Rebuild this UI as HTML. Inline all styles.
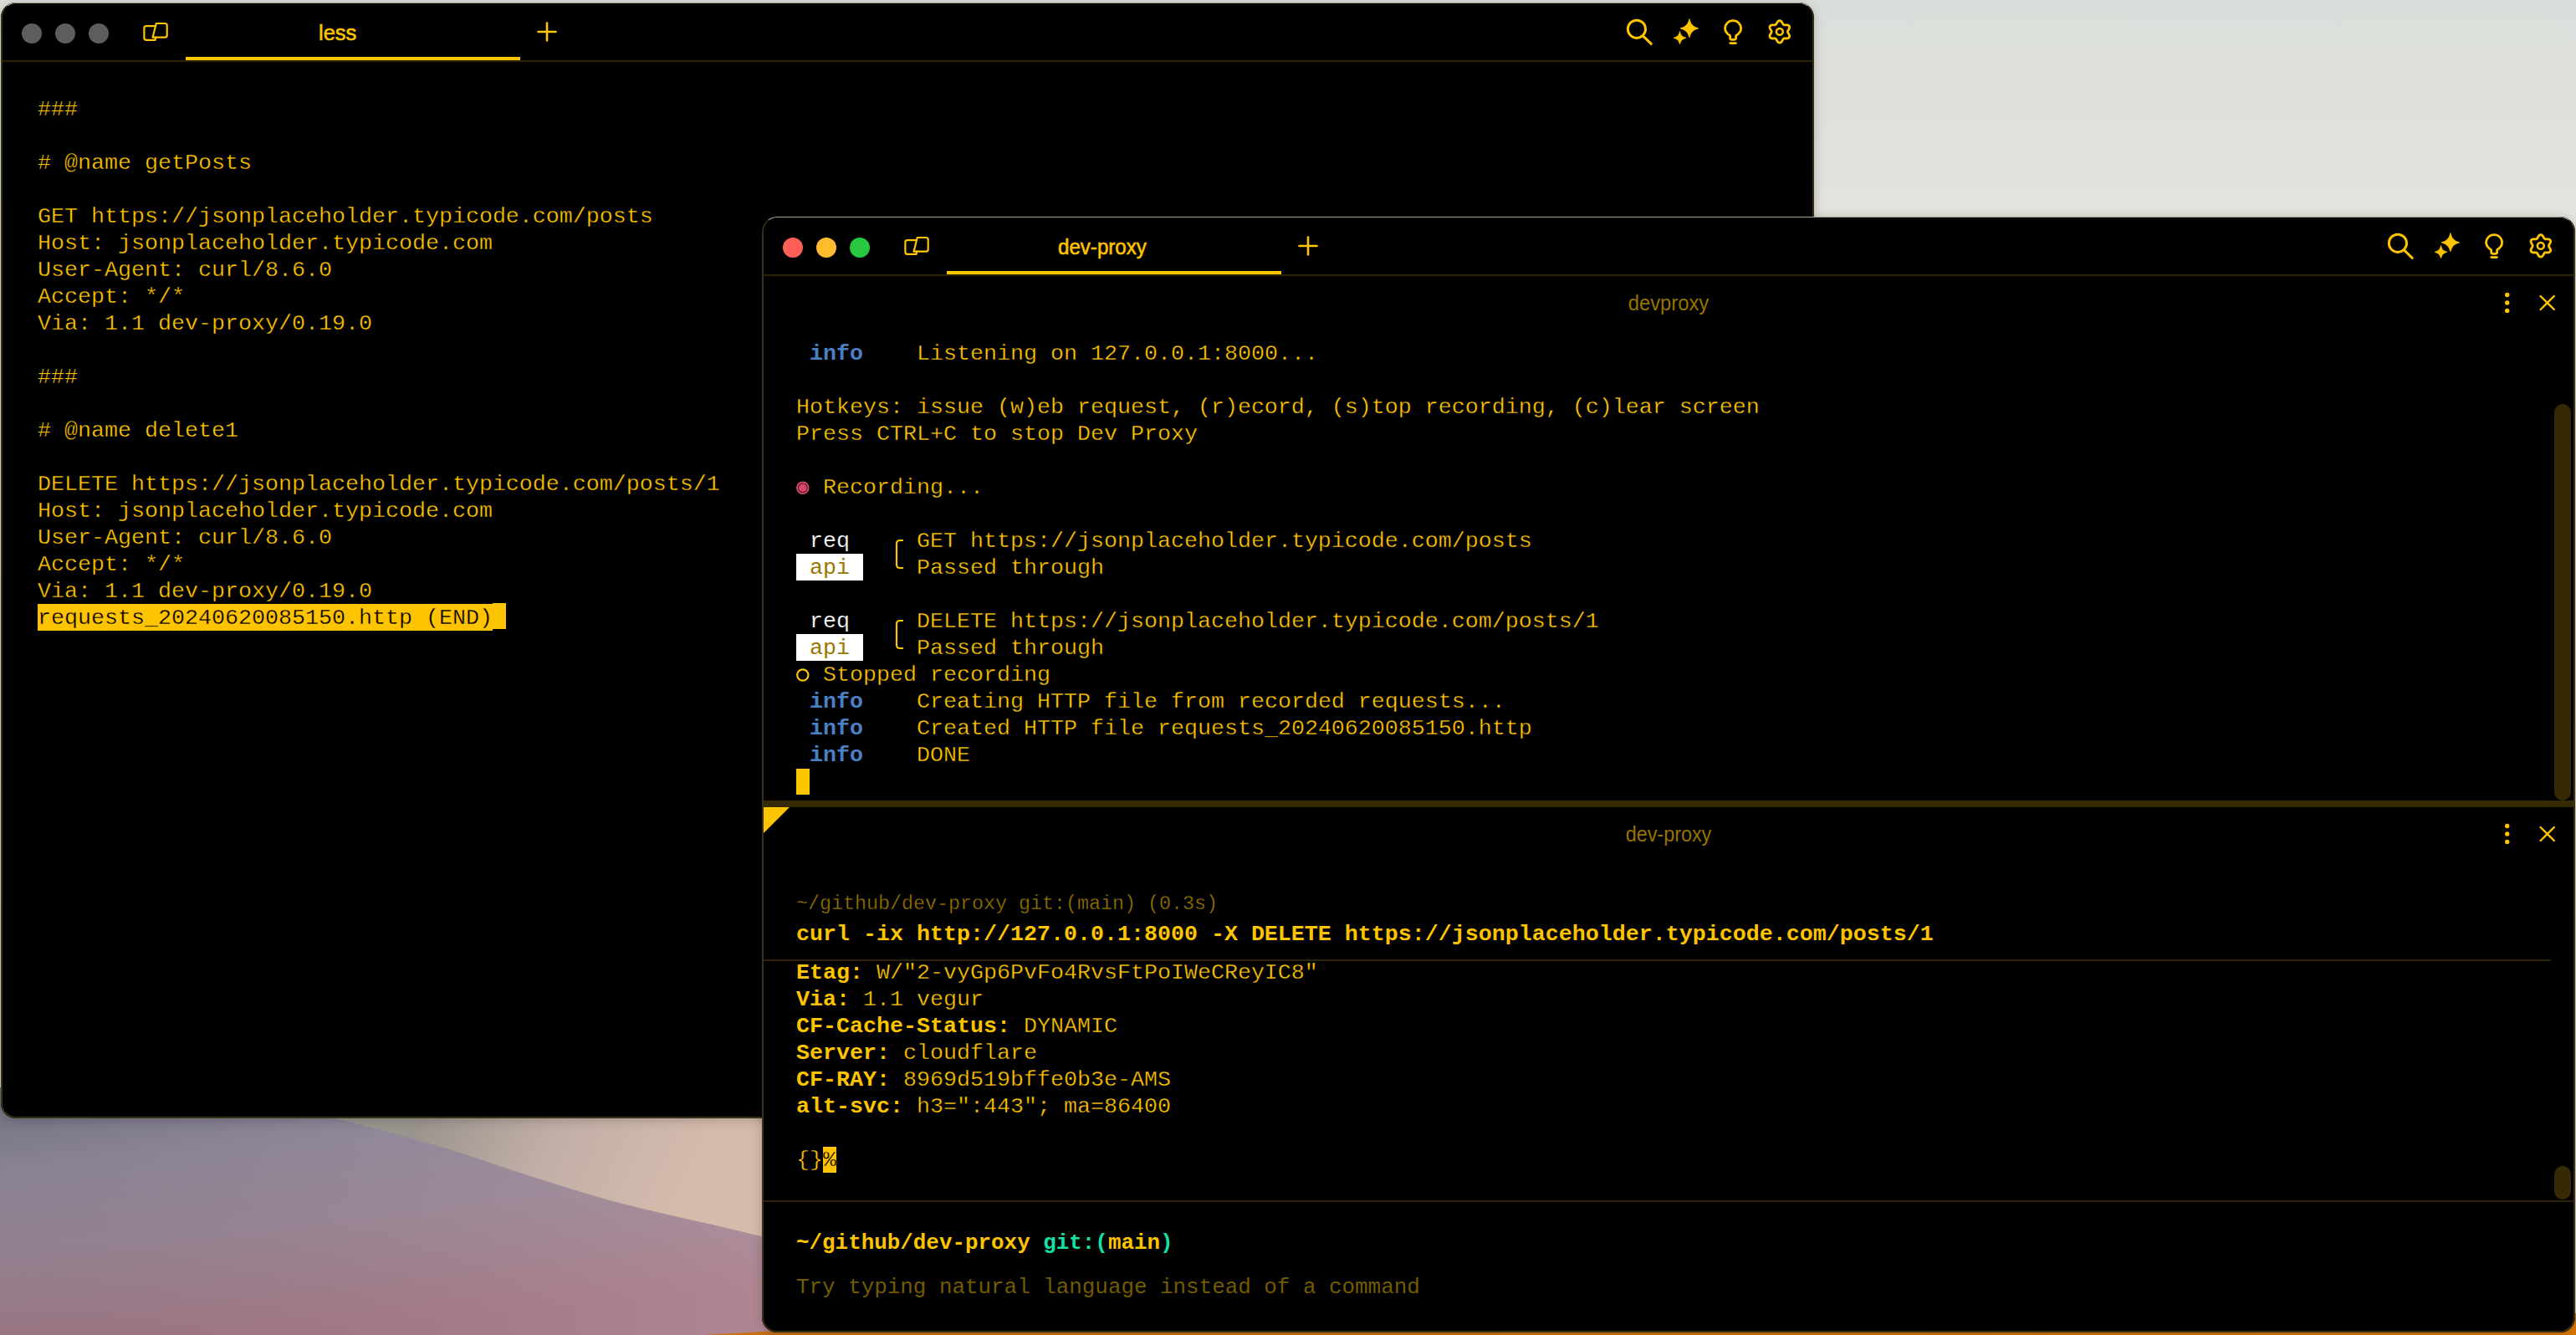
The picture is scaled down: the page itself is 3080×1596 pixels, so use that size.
<!DOCTYPE html>
<html><head><meta charset="utf-8">
<style>
*{margin:0;padding:0;box-sizing:border-box}
html,body{width:3080px;height:1596px;overflow:hidden}
body{position:relative;background:linear-gradient(180deg,#dde0dc 0%,#e0e0da 20%,#dcd8d0 60%,#c8bcb4 100%);font-family:"Liberation Sans",sans-serif}
.desk{position:absolute;left:0;top:1200px;width:1000px;height:396px;
 background:linear-gradient(180deg,#767a8a 0%,#8d879a 30%,#97889a 55%,#9a7d8a 100%)}
.orange{position:absolute;left:880px;top:1585px;width:2200px;height:11px;background:#c86e00}
.win{position:absolute;width:2168px;height:1334px;background:#000;border-radius:18px;overflow:hidden;
 box-shadow:0 2px 14px rgba(0,0,0,0.2)}
.win::after{content:"";position:absolute;left:0;top:0;right:0;bottom:0;border-radius:18px;border:2px solid #3a3016;border-top:1px solid #aca690;pointer-events:none}
#w1{left:1px;top:3px}
#w2{left:911px;top:259px}
.topline{position:absolute;left:0;top:0;width:100%;height:18px;border-radius:18px 18px 0 0;border-top:1px solid rgba(215,208,185,0.8)}
.tl{position:absolute;top:25px;width:24px;height:24px;border-radius:50%}
.sep{position:absolute;left:0;top:69px;width:100%;height:2px;background:#2b2208}
.uline{position:absolute;left:221px;top:65px;width:400px;height:4px;background:#fec400}
.ttl{position:absolute;top:22px;font-size:25.5px;color:#fec400;white-space:pre;-webkit-text-stroke:0.6px #fec400}
.ptl{position:absolute;left:0;width:2168px;text-align:center;font-size:25px;color:#967400;white-space:pre}
svg{position:absolute;left:0;top:0;overflow:visible}
pre{-webkit-text-stroke:0.35px #000;position:absolute;font-family:"Liberation Mono",monospace;font-size:26.667px;line-height:32px;color:#fec400;white-space:pre}
.b{font-weight:bold;-webkit-text-stroke:0}
.blue{color:#4b80c2;font-weight:bold;-webkit-text-stroke:0}
.wh{color:#fff;-webkit-text-stroke:0.2px #000}
.grn{color:#14e0a2}
.dim{color:#8a6a00}
.ph{color:#735b00;-webkit-text-stroke:0}
.box{position:absolute}
</style></head><body>
<svg width="0" height="0" style="position:absolute">
 <defs>
  <g id="tbicons" fill="none" stroke="#fec400" stroke-linecap="round" stroke-linejoin="round">
   <!-- tab icon -->
   <path d="M185.8,25 H196.2 Q198.7,25 198.7,27.5 V39.2 Q198.7,41.7 196.2,41.7 H181.5 Z" stroke-width="2.2"/>
   <path d="M184.3,28.1 H173.9 Q171.4,28.1 171.4,30.6 V42.3 Q171.4,44.8 173.9,44.8 H184.6 L185.1,41.7" stroke-width="2.2"/>
   <!-- plus -->
   <path d="M642.5,35 H663.5 M653,24.5 V45.5" stroke-width="2.6"/>
   <!-- search -->
   <circle cx="1955.9" cy="31.8" r="10.6" stroke-width="3"/>
   <path d="M1963.6,40.2 L1973.2,49.4" stroke-width="3"/>
   <!-- sparkles -->
   <path d="M2018.90,20.10 C2021.06,26.85 2022.95,28.74 2029.70,30.90 C2022.95,33.06 2021.06,34.95 2018.90,41.70 C2016.74,34.95 2014.85,33.06 2008.10,30.90 C2014.85,28.74 2016.74,26.85 2018.90,20.10 Z" fill="#fec400" stroke-width="0.8"/>
   <path d="M2007.50,34.90 C2008.98,39.52 2010.28,40.82 2014.90,42.30 C2010.28,43.78 2008.98,45.07 2007.50,49.70 C2006.02,45.07 2004.72,43.78 2000.10,42.30 C2004.72,40.82 2006.02,39.52 2007.50,34.90 Z" fill="#fec400" stroke-width="0.8"/>
   <!-- bulb -->
   <path d="M2067.6,39.6 V42.2 Q2067.6,44.4 2069.8,44.4 H2072.4 Q2074.6,44.4 2074.6,42.2 V39.6 Q2080.6,36.2 2080.6,31.1 A9.5,9.5 0 0 0 2061.6,31.1 Q2061.6,36.2 2067.6,39.6Z" stroke-width="2.8"/>
   <path d="M2067.8,48.6 H2074.4" stroke-width="2.8"/>
   <!-- gear -->
   <g transform="translate(2126.8,34.9)">
    <path d="M9.60,-0.00 L9.81,-0.86 L10.37,-1.83 L11.06,-2.96 L11.63,-4.23 L11.83,-5.52 L11.52,-6.65 L10.69,-7.49 L9.48,-7.95 L8.10,-8.10 L6.77,-8.06 L5.65,-8.07 L4.80,-8.31 L4.16,-8.93 L3.60,-9.89 L2.96,-11.06 L2.15,-12.19 L1.14,-13.00 L0.00,-13.30 L-1.14,-13.00 L-2.15,-12.19 L-2.96,-11.06 L-3.60,-9.89 L-4.16,-8.93 L-4.80,-8.31 L-5.65,-8.07 L-6.77,-8.06 L-8.10,-8.10 L-9.48,-7.95 L-10.69,-7.49 L-11.52,-6.65 L-11.83,-5.52 L-11.63,-4.23 L-11.06,-2.96 L-10.37,-1.83 L-9.81,-0.86 L-9.60,-0.00 L-9.81,0.86 L-10.37,1.83 L-11.06,2.96 L-11.63,4.23 L-11.83,5.52 L-11.52,6.65 L-10.69,7.49 L-9.48,7.95 L-8.10,8.10 L-6.77,8.06 L-5.65,8.07 L-4.80,8.31 L-4.16,8.93 L-3.60,9.89 L-2.96,11.06 L-2.15,12.19 L-1.14,13.00 L-0.00,13.30 L1.14,13.00 L2.15,12.19 L2.96,11.06 L3.60,9.89 L4.16,8.93 L4.80,8.31 L5.65,8.07 L6.77,8.06 L8.10,8.10 L9.48,7.95 L10.69,7.49 L11.52,6.65 L11.83,5.52 L11.63,4.23 L11.06,2.96 L10.37,1.83 L9.81,0.86Z" stroke-width="2.8"/>
    <circle cx="0" cy="0" r="3.9" stroke-width="2.6"/>
   </g>
  </g>
  <g id="paneicons" fill="#fec400" stroke="#fec400" stroke-linecap="round">
   <circle cx="2086.7" cy="-9.5" r="2.7" stroke="none"/>
   <circle cx="2086.7" cy="0" r="2.7" stroke="none"/>
   <circle cx="2086.7" cy="9.4" r="2.7" stroke="none"/>
   <path d="M2126.6,-8 L2142.8,8 M2142.8,-8 L2126.6,8" stroke-width="2.4" fill="none"/>
  </g>
 </defs>
</svg>
<svg width="3080" height="1596" style="position:absolute;left:0;top:0">
 <defs>
  <linearGradient id="gtop" x1="0" y1="0" x2="0" y2="1">
   <stop offset="0" stop-color="#dadfdb"/><stop offset="0.08" stop-color="#dfe0db"/><stop offset="0.16" stop-color="#e4e3dd"/><stop offset="1" stop-color="#d8d2ca"/>
  </linearGradient>
  <linearGradient id="gpur" x1="0" y1="0" x2="0.35" y2="1">
   <stop offset="0" stop-color="#747885"/><stop offset="0.3" stop-color="#928c9e"/><stop offset="0.6" stop-color="#9c8a98"/><stop offset="1" stop-color="#a67a88"/>
  </linearGradient>
  <linearGradient id="gpur2" x1="0" y1="0" x2="1" y2="0">
   <stop offset="0" stop-color="#201020" stop-opacity="0.08"/><stop offset="1" stop-color="#ffd8e0" stop-opacity="0.16"/>
  </linearGradient>
  <linearGradient id="gbei" gradientUnits="userSpaceOnUse" x1="500" y1="1337" x2="800" y2="1480">
   <stop offset="0" stop-color="#9a948e"/><stop offset="0.45" stop-color="#c0aea6"/><stop offset="1" stop-color="#d6bbad"/>
  </linearGradient>
  <linearGradient id="gor" x1="0" y1="0" x2="1" y2="0">
   <stop offset="0" stop-color="#c87018"/><stop offset="1" stop-color="#d87800"/>
  </linearGradient>
 </defs>
 <rect x="0" y="0" width="3080" height="1596" fill="url(#gtop)"/>
 <rect x="0" y="1300" width="1000" height="296" fill="url(#gpur)"/>
 <rect x="0" y="1300" width="1000" height="296" fill="url(#gpur2)"/>
 <path d="M380,1300 L1000,1300 L1000,1500 L908,1477.6 C830,1458 770,1447 715,1431 C670,1418 630,1405 590,1391.6 C520,1367 460,1352 401,1337 Z" fill="url(#gbei)"/>
 <path d="M842,1596 L920,1591.5 L3080,1570 L3080,1596 Z" fill="url(#gor)"/>
</svg>

<!-- LEFT WINDOW -->
<div class="win" id="w1">
 <div class="tl" style="left:25px;background:#5e5e5e"></div>
 <div class="tl" style="left:65px;background:#5e5e5e"></div>
 <div class="tl" style="left:105px;background:#5e5e5e"></div>
 <div class="sep"></div>
 <div class="uline"></div>
 <div class="ttl" style="left:380px">less</div>
 <svg width="2168" height="71"><use href="#tbicons"/></svg>
 <div class="box" style="left:44px;top:719px;width:544px;height:32px;background:#fec400"></div>
 <div class="box" style="left:588px;top:718px;width:16px;height:31px;background:#fec400"></div>
 <pre style="left:44px;top:112px">###

# @name getPosts

GET https://jsonplaceholder.typicode.com/posts
Host: jsonplaceholder.typicode.com
User-Agent: curl/8.6.0
Accept: */*
Via: 1.1 dev-proxy/0.19.0

###

# @name delete1

DELETE https://jsonplaceholder.typicode.com/posts/1
Host: jsonplaceholder.typicode.com
User-Agent: curl/8.6.0
Accept: */*
Via: 1.1 dev-proxy/0.19.0
<span style="color:#000;-webkit-text-stroke:0.35px #fec400">requests_20240620085150.http (END)</span></pre>
</div>

<!-- RIGHT WINDOW -->
<div class="win" id="w2">
 <div class="tl" style="left:25px;background:#ff5f57"></div>
 <div class="tl" style="left:65px;background:#febc2e"></div>
 <div class="tl" style="left:105px;background:#28c840"></div>
 <div class="sep"></div>
 <div class="uline"></div>
 <div class="ttl" style="left:354px;transform:scaleX(0.945);transform-origin:0 0">dev-proxy</div>
 <svg width="2168" height="71"><use href="#tbicons"/></svg>

 <!-- pane 1 -->
 <div class="ptl" style="top:89px;transform:scaleX(0.95)">devproxy</div>
 <svg width="2168" height="20" style="top:103px"><use href="#paneicons"/></svg>
 <div class="box" style="left:2143px;top:224px;width:20px;height:474px;border-radius:10px;background:#352a04"></div>
 <div class="box" style="left:41px;top:403px;width:80px;height:32px;background:#fff"></div>
 <div class="box" style="left:41px;top:499px;width:80px;height:32px;background:#fff"></div>
 <svg width="200" height="400">
  <g fill="none" stroke="#fec400" stroke-width="2.2">
   <path d="M169,387 H165 Q161,387 161,391 V416 Q161,420 165,420 H169"/>
   <path d="M169,483 H165 Q161,483 161,487 V512 Q161,516 165,516 H169"/>
   <circle cx="48.8" cy="548" r="6.65"/>
  </g>
  <circle cx="48.8" cy="324.2" r="6.75" fill="none" stroke="#d8486a" stroke-width="2"/><circle cx="48.8" cy="324.2" r="5" fill="#d4466a"/>
 </svg>
 <div class="box" style="left:41px;top:660px;width:16px;height:31px;background:#fec400"></div>
 <pre style="left:41px;top:148px"> <span class="blue">info</span>    Listening on 127.0.0.1:8000...

Hotkeys: issue (w)eb request, (r)ecord, (s)top recording, (c)lear screen
Press CTRL+C to stop Dev Proxy

  Recording...

 <span class="wh">req</span>     GET https://jsonplaceholder.typicode.com/posts
 <span style="color:#9a7700;-webkit-text-stroke:0">api</span>     Passed through

 <span class="wh">req</span>     DELETE https://jsonplaceholder.typicode.com/posts/1
 <span style="color:#9a7700;-webkit-text-stroke:0">api</span>     Passed through
  Stopped recording
 <span class="blue">info</span>    Creating HTTP file from recorded requests...
 <span class="blue">info</span>    Created HTTP file requests_20240620085150.http
 <span class="blue">info</span>    DONE
</pre>

 <!-- divider -->
 <div class="box" style="left:0;top:698px;width:2168px;height:8px;background:#352a04"></div>
 <svg width="40" height="40"><path d="M0,706 H33 L0,739Z" fill="#fec400"/></svg>

 <!-- pane 2 -->
 <div class="ptl" style="top:724px;transform:scaleX(0.935)">dev-proxy</div>
 <svg width="2168" height="20" style="top:738px"><use href="#paneicons"/></svg>
 <pre style="left:41px;top:808px;font-size:23.333px;line-height:28px;color:#957400">~/github/dev-proxy git:(main) (0.3s)</pre>
 <pre class="b" style="left:41px;top:842px">curl -ix http://127.0.0.1:8000 -X DELETE https://jsonplaceholder.typicode.com/posts/1</pre>
 <div class="box" style="left:0;top:888px;width:2139px;height:2px;background:#2b2208"></div>
 <div class="box" style="left:73px;top:1112px;width:16px;height:31px;background:#fec400"></div>
 <pre style="left:41px;top:888px"><span class="b">Etag:</span> W/"2-vyGp6PvFo4RvsFtPoIWeCReyIC8"
<span class="b">Via:</span> 1.1 vegur
<span class="b">CF-Cache-Status:</span> DYNAMIC
<span class="b">Server:</span> cloudflare
<span class="b">CF-RAY:</span> 8969d519bffe0b3e-AMS
<span class="b">alt-svc:</span> h3=":443"; ma=86400

{}<span style="color:#000;-webkit-text-stroke:0.35px #fec400">%</span></pre>
 <div class="box" style="left:2143px;top:1135px;width:20px;height:40px;border-radius:10px;background:#352a04"></div>
 <div class="box" style="left:0;top:1176px;width:2168px;height:2px;background:#2b2208"></div>
 <pre class="b" style="left:41px;top:1211px;font-size:25.9px">~/github/dev-proxy <span class="grn">git:(</span>main<span class="grn">)</span></pre>
 <pre class="ph" style="left:41px;top:1264px;font-size:25.9px">Try typing natural language instead of a command</pre>
</div>
</body></html>
